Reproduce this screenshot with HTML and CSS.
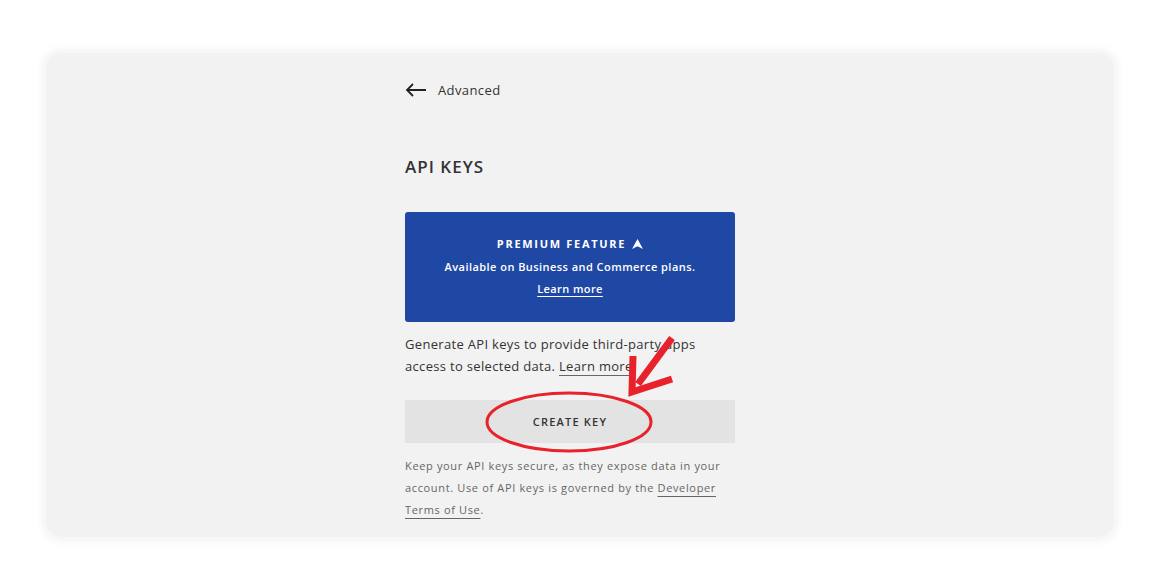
FILE: index.html
```html
<!DOCTYPE html>
<html>
<head>
<meta charset="utf-8">
<link rel="stylesheet" href="styles.css">
</head>
<body>
<div class="page">
  <div class="card">
    <div class="column">
      <a class="back">
        <svg class="back-icon" width="22" height="14" viewBox="0 0 22 14"><path d="M21 7H2M8 1L2 7l6 6" fill="none" stroke="#222" stroke-width="1.8"/></svg>
        <span>Advanced</span>
      </a>
      <h1 class="title">API KEYS</h1>
      <div class="premium">
        <div class="premium-title">PREMIUM FEATURE
          <svg class="premium-icon" width="11" height="10" viewBox="0 0 11 10"><path d="M5.5 0L11 10L5.5 7.2L0 10Z" fill="#fff"/></svg>
        </div>
        <div class="premium-sub">Available on Business and Commerce plans.</div>
        <a class="premium-link">Learn more</a>
      </div>
      <p class="desc">Generate API keys to provide third-party apps access to selected data. <a class="ulink">Learn more</a></p>
      <div class="btn-wrap">
        <button class="btn">CREATE KEY</button>
        <svg class="annot" width="200" height="130" viewBox="0 0 200 130">
          <ellipse cx="84" cy="86" rx="82" ry="29" fill="none" stroke="#e8212b" stroke-width="3"/>
          <path d="M187 2L153 48" fill="none" stroke="#e8212b" stroke-width="7"/>
          <path d="M148 20L147 56L187 43" fill="none" stroke="#e8212b" stroke-width="7" stroke-linejoin="miter"/>
        </svg>
      </div>
      <p class="note">Keep your API keys secure, as they expose data in your account. Use of API keys is governed by the <a class="ulink">Developer Terms of Use</a>.</p>
    </div>
  </div>
</div>
</body>
</html>
```
FILE: styles.css
```css
* { box-sizing: border-box; }
html, body { margin: 0; padding: 0; background: #fff; }
body { font-family: "Open Sans", "Liberation Sans", sans-serif; color: #333; }
.page { padding: 53px 46px 45px; }
.card {
  height: 484px;
  background: #f2f2f2;
  border-radius: 16px;
  box-shadow: 0 0 0 3px #f7f7f7, 0 0 8px 4px rgba(0,0,0,0.05);
  display: flex;
  justify-content: center;
}
.column { width: 330px; padding-top: 28px; margin-left: -20px; }
.back { display: flex; align-items: center; gap: 11px; font-size: 13px; color: #333; height: 18px; letter-spacing: 0.4px; }
.back-icon { display: block; }
.title { margin: 57px 0 0; font-size: 17px; font-weight: 600; letter-spacing: 1px; line-height: 22px; color: #333; }
.premium {
  margin-top: 34px;
  height: 110px;
  background: #1f48a4;
  border-radius: 3px;
  color: #fff;
  display: flex; flex-direction: column; align-items: center;
  padding-top: 24px;
}
.premium-title { font-size: 11px; font-weight: 700; letter-spacing: 1.7px; line-height: 16px; display: flex; align-items: center; gap: 6px; }
.premium-sub { font-size: 11px; font-weight: 600; margin-top: 7px; line-height: 16px; letter-spacing: 0.45px; }
.premium-link { font-size: 11px; font-weight: 600; margin-top: 6px; line-height: 16px; letter-spacing: 0.4px; text-decoration: underline; text-underline-offset: 3px; }
.desc { margin: 11px 0 0; font-size: 13px; line-height: 22px; color: #333; letter-spacing: 0.32px; }
.ulink { text-decoration: underline; text-underline-offset: 4px; text-decoration-color: #666; }
.btn-wrap { position: relative; margin-top: 23px; }
.btn {
  display: block; width: 100%; height: 43px; border: 0;
  background: #e3e3e3; font-family: inherit; font-size: 11px; font-weight: 600;
  letter-spacing: 1.2px; color: #333;
}
.annot { position: absolute; left: 80px; top: -64px; overflow: visible; pointer-events: none; }
.note { margin: 12px 0 0; font-size: 11px; line-height: 22px; color: #666; letter-spacing: 0.65px; }
```
